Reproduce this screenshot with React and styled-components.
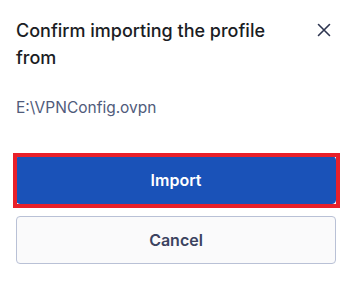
import React from "react";
import styled, { createGlobalStyle } from "styled-components";

const GlobalStyle = createGlobalStyle`
  html, body {
    margin: 0;
    padding: 0;
    background: #ffffff;
    font-family: Inter, "Liberation Sans", sans-serif;
  }
`;

const Dialog = styled.div`
  width: 353px;
  box-sizing: border-box;
  padding: 17px 17px 16px 16px;
`;

const Header = styled.div`
  display: flex;
  align-items: flex-start;
  gap: 22px;
`;

const Title = styled.h2`
  flex: 1;
  margin: 0;
  font-size: 18px;
  line-height: 27px;
  font-weight: 500;
  color: #1b1d24;
`;

const CloseButton = styled.button`
  flex: none;
  width: 24px;
  height: 24px;
  margin-top: 1px;
  padding: 0;
  border: none;
  background: transparent;
  display: flex;
  align-items: center;
  justify-content: center;
  color: #2d3550;
  cursor: pointer;
`;

const FilePath = styled.p`
  margin: 26px 0 0;
  font-size: 15.5px;
  line-height: 22px;
  color: #505b7b;
`;

const Actions = styled.div`
  display: flex;
  flex-direction: column;
  gap: 12px;
  margin-top: 37px;
`;

const Button = styled.button`
  position: relative;
  width: 100%;
  height: 48px;
  box-sizing: border-box;
  border-radius: 4px;
  font-family: inherit;
  font-size: 16px;
  font-weight: 600;
  cursor: pointer;
  border: 1px solid ${({ $primary }) => ($primary ? "#1a52b8" : "#b9c1d6")};
  background: ${({ $primary }) => ($primary ? "#1a52b8" : "#fafafb")};
  color: ${({ $primary }) => ($primary ? "#ffffff" : "#3b4360")};

  /* square red highlight frame drawn over the button */
  &::after {
    content: "";
    display: ${({ $highlight }) => ($highlight ? "block" : "none")};
    position: absolute;
    top: -4px;
    left: -4px;
    right: -5px;
    bottom: -5px;
    border: 4px solid #e8202a;
    pointer-events: none;
  }
`;

const App = () => {
  return (
    <>
      <GlobalStyle />
      <Dialog>
        <Header>
          <Title>Confirm importing the profile from</Title>
          <CloseButton aria-label="Close">
            <svg width="14" height="14" viewBox="0 0 14 14" fill="none">
              <path
                d="M1.5 1.5L12.5 12.5M12.5 1.5L1.5 12.5"
                stroke="currentColor"
                strokeWidth="1.6"
                strokeLinecap="round"
              />
            </svg>
          </CloseButton>
        </Header>
        <FilePath>E:\VPNConfig.ovpn</FilePath>
        <Actions>
          <Button $primary $highlight>
            Import
          </Button>
          <Button>Cancel</Button>
        </Actions>
      </Dialog>
    </>
  );
};

export default App;
